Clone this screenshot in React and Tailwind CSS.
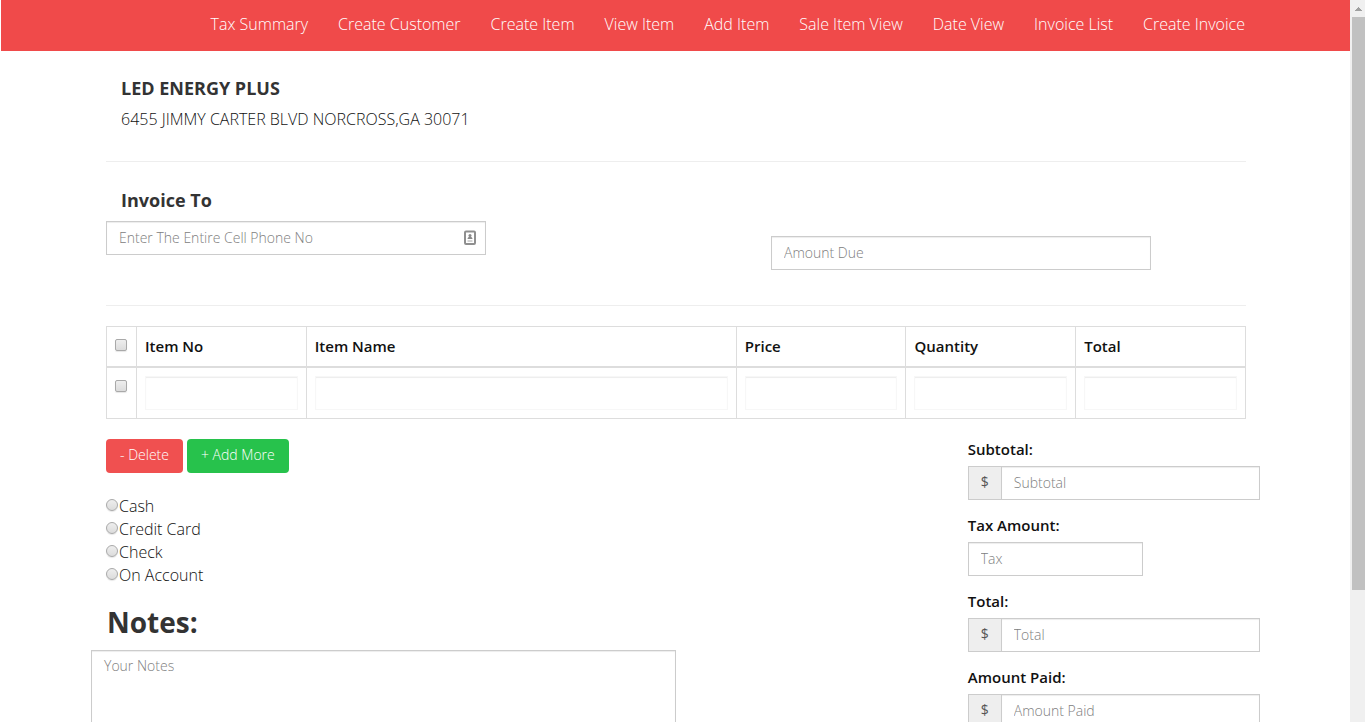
const NAV_ITEMS = [
  "Tax Summary",
  "Create Customer",
  "Create Item",
  "View Item",
  "Add Item",
  "Sale Item View",
  "Date View",
  "Invoice List",
  "Create Invoice",
];

const COLUMNS = [
  { label: "Item No", width: "w-[15%]" },
  { label: "Item Name", width: "w-[38%]" },
  { label: "Price", width: "w-[15%]" },
  { label: "Quantity", width: "w-[15%]" },
  { label: "Total", width: "w-[15%]" },
];

const PAYMENTS = ["Cash", "Credit Card", "Check", "On Account"];

const field =
  "block h-[34px] w-full border border-[#ccc] bg-white px-3 pb-0.5 text-sm text-[#555] placeholder-[#808080] shadow-[inset_0_1px_1px_rgba(0,0,0,0.075)] outline-none focus:border-[#66afe9]";

const cellField =
  "block h-[34px] w-full border border-[#f7f7f7] bg-white px-3 text-sm text-[#555] shadow-[inset_0_1px_1px_rgba(0,0,0,0.075)] outline-none focus:border-[#66afe9]";

function Checkbox({ label }) {
  return (
    <input
      type="checkbox"
      aria-label={label}
      className="block size-3 appearance-none rounded-xs border border-[#a9a9a9] bg-linear-to-b from-[#eee] to-[#dcdcdc] shadow-[0_1px_1px_rgba(0,0,0,0.1)] checked:from-[#777] checked:to-[#555]"
    />
  );
}

function Amount({ id, label, placeholder, prefix = true }) {
  return (
    <div className="mb-[15px]">
      <label htmlFor={id} className="mb-[7px] block text-[15px] font-semibold leading-5">
        {label}
      </label>
      {prefix ? (
        <div className="flex">
          <span className="flex w-[33px] shrink-0 items-center justify-center border border-r-0 border-[#ccc] bg-[#eee] pb-0.5 text-sm font-normal text-[#555]">
            $
          </span>
          <input id={id} type="text" placeholder={placeholder} className={field} />
        </div>
      ) : (
        <div className="w-3/5">
          <input id={id} type="text" placeholder={placeholder} className={field} />
        </div>
      )}
    </div>
  );
}

function ScrollRail() {
  return (
    <div aria-hidden="true" className="flex w-[15px] shrink-0 flex-col bg-[#f0f0f0]">
      <div className="flex h-[17px] shrink-0 items-center justify-center pl-0.5">
        <svg width="7" height="4" viewBox="0 0 7 4" fill="#a0a0a0" shapeRendering="crispEdges">
          <path d="M3 0h1v1h1v1h1v1h1v1H0V3h1V2h1V1h1z" />
        </svg>
      </div>
      <div className="ml-0.5 h-[79.4%] bg-[#c1c1c1]" />
    </div>
  );
}

export default function App() {
  return (
    <div className="flex h-screen bg-white font-['Open_Sans',sans-serif] text-base font-light text-[#111]">
      <div className="min-w-0 flex-1 overflow-y-auto pl-px [scrollbar-width:none]">
        <nav className="bg-[#f04a4a]">
          <ul className="mx-auto flex h-[51px] max-w-[1169px] items-center justify-end gap-[30px] px-[15px] text-white">
            {NAV_ITEMS.map((item) => (
              <li key={item}>
                <a href="#" className="block whitespace-nowrap pb-[3px] hover:underline">
                  {item}
                </a>
              </li>
            ))}
          </ul>
        </nav>

        <main className="mx-auto max-w-[1169px] pl-[15px] pr-[14px]">
          <header className="px-[15px] pt-[27px]">
            <h1 className="text-lg font-bold leading-5 text-[#333]">LED ENERGY PLUS</h1>
            <p className="mt-2.5 leading-[23px]">6455 JIMMY CARTER BLVD NORCROSS,GA 30071</p>
          </header>

          <hr className="mt-[30px] border-[#eee]" />

          <section className="mt-7">
            <h2 className="px-[15px] text-lg font-bold leading-5 text-[#333]">Invoice To</h2>
            <div className="mt-[11px] grid grid-cols-12">
              <div className="relative col-span-4">
                <input
                  type="text"
                  aria-label="Cell phone number"
                  placeholder="Enter The Entire Cell Phone No"
                  className={field}
                />
                <svg
                  className="absolute right-[9px] top-2"
                  width="14"
                  height="16"
                  viewBox="0 0 14 16"
                  fill="none"
                >
                  <rect x="2" y="2.500" width="10" height="12.500" rx="1" stroke="#8f8f8f" strokeWidth="2" fill="#fff" />
                  <circle cx="7" cy="6.500" r="1.5" fill="#888" />
                  <path d="M4.500 10C4.500 8.500 6 7.500 7 7.500s2.500 1 2.500 2.500z" fill="#888" />
                  <path d="M4.500 12h5" stroke="#a8a8a8" />
                </svg>
              </div>
              <div className="col-span-4 col-start-8 pt-[15px]">
                <input type="text" aria-label="Amount due" placeholder="Amount Due" className={field} />
              </div>
            </div>
          </section>

          <hr className="mt-[35px] border-[#eee]" />

          <table className="mt-5 w-full table-fixed border-collapse border border-[#ddd]">
            <thead>
              <tr>
                <th className="w-[30px] border border-b-2 border-[#ddd] px-2 pb-1">
                  <Checkbox label="Select all items" />
                </th>
                {COLUMNS.map((col) => (
                  <th
                    key={col.label}
                    className={`${col.width} border border-b-2 border-[#ddd] p-2 text-left text-[15px] font-semibold leading-[23px]`}
                  >
                    {col.label}
                  </th>
                ))}
              </tr>
            </thead>
            <tbody>
              <tr>
                <td className="border border-[#ddd] px-2 pt-3 align-top">
                  <Checkbox label="Select item" />
                </td>
                {COLUMNS.map((col) => (
                  <td key={col.label} className="border border-[#ddd] p-2">
                    <input type="text" aria-label={col.label} className={cellField} />
                  </td>
                ))}
              </tr>
            </tbody>
          </table>

          <div className="-mr-[14px] -ml-[15px] mt-5 flex justify-between">
            <div className="w-1/2">
              <div className="flex gap-1 pl-[15px] text-sm text-white">
                <button type="button" className="h-[34px] rounded-sm bg-[#f05050] px-3.5 pb-0.5 hover:bg-[#e04040]">
                  - Delete
                </button>
                <button type="button" className="h-[34px] rounded-sm bg-[#27c24c] px-3.5 pb-0.5 hover:bg-[#23ad44]">
                  + Add More
                </button>
              </div>

              <div role="radiogroup" aria-label="Payment method" className="mt-[22px] pl-[15px]">
                {PAYMENTS.map((name) => (
                  <label key={name} className="flex w-fit items-center gap-px leading-[23px]">
                    <input
                      type="radio"
                      name="payment"
                      className="mb-[3px] size-3 appearance-none rounded-full border border-[#a9a9a9] bg-linear-to-b from-[#eee] to-[#dcdcdc] shadow-[0_1px_1px_rgba(0,0,0,0.1)] checked:from-[#777] checked:to-[#555]"
                    />
                    {name}
                  </label>
                ))}
              </div>

              <h2 className="mt-[18px] pl-4 text-[28px] font-bold leading-[34px] text-[#333]">
                <label htmlFor="notes">Notes:</label>
              </h2>
              <textarea
                id="notes"
                rows={6}
                placeholder="Your Notes"
                className="mt-[11px] block w-full resize-none border border-[#ccc] px-3 py-[5px] text-sm leading-5 text-[#555] placeholder-[#808080] shadow-[inset_0_1px_1px_rgba(0,0,0,0.075)] outline-none focus:border-[#66afe9]"
              />
            </div>

            <div className="w-1/4">
              <Amount id="subtotal" label="Subtotal:" placeholder="Subtotal" />
              <Amount id="tax" label="Tax Amount:" placeholder="Tax" prefix={false} />
              <Amount id="total" label="Total:" placeholder="Total" />
              <Amount id="paid" label="Amount Paid:" placeholder="Amount Paid" />
            </div>
          </div>
        </main>
      </div>
      <ScrollRail />
    </div>
  );
}
